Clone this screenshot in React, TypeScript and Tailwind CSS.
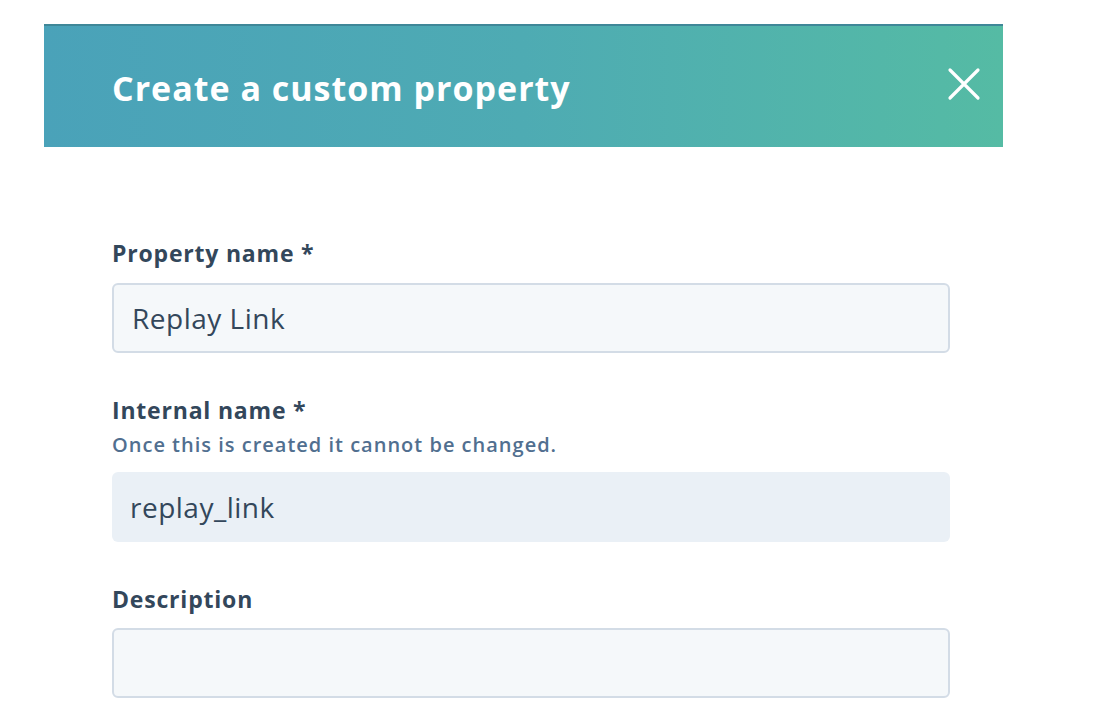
import React from "react";

export default function App() {
  const font = { fontFamily: '"Open Sans", "Noto Sans", sans-serif' };
  return (
    <div className="w-[1094px] h-[728px] bg-white overflow-hidden" style={font}>
      <div className="ml-[44px] pt-[24px] w-[959px]">
        <div className="h-[123px] border-t-2 border-[#3f8798] bg-gradient-to-r from-[#4aa2b9] via-[#4eabb3] to-[#55bba4] flex items-center justify-between pl-[68px] pr-[22px]">
          <h1 className="text-white text-[34px] font-bold tracking-[1px] leading-none mt-[2px]">
            Create a custom property
          </h1>
          <svg width="34" height="34" viewBox="0 0 34 34" className="mb-[6px]">
            <path d="M3 3 L31 31 M31 3 L3 31" stroke="white" strokeWidth="3.2" strokeLinecap="round" />
          </svg>
        </div>
        <div className="pl-[68px] w-[906px] flex flex-col text-[#33475b]">
          <label className="mt-[91px] text-[23px] font-bold tracking-[0.8px] leading-[30px]">Property name *</label>
          <div className="mt-[15px] h-[70px] rounded-[6px] border-2 border-[#d3dce6] bg-[#f5f8fa] flex items-center pl-[18px] text-[28px] tracking-[0.5px]">
            Replay Link
          </div>
          <label className="mt-[42px] text-[23px] font-bold tracking-[0.8px] leading-[30px]">Internal name *</label>
          <div className="mt-[7px] text-[20px] font-semibold tracking-[1px] text-[#516f90] leading-[26px]">
            Once this is created it cannot be changed.
          </div>
          <div className="mt-[14px] h-[70px] rounded-[6px] bg-[#eaf0f6] flex items-center pl-[18px] text-[28px] tracking-[0.5px]">
            replay_link
          </div>
          <label className="mt-[42px] text-[23px] font-bold tracking-[0.8px] leading-[30px]">Description</label>
          <div className="mt-[14px] h-[70px] rounded-[6px] border-2 border-[#d3dce6] bg-[#f5f8fa]" />
        </div>
      </div>
    </div>
  );
}
